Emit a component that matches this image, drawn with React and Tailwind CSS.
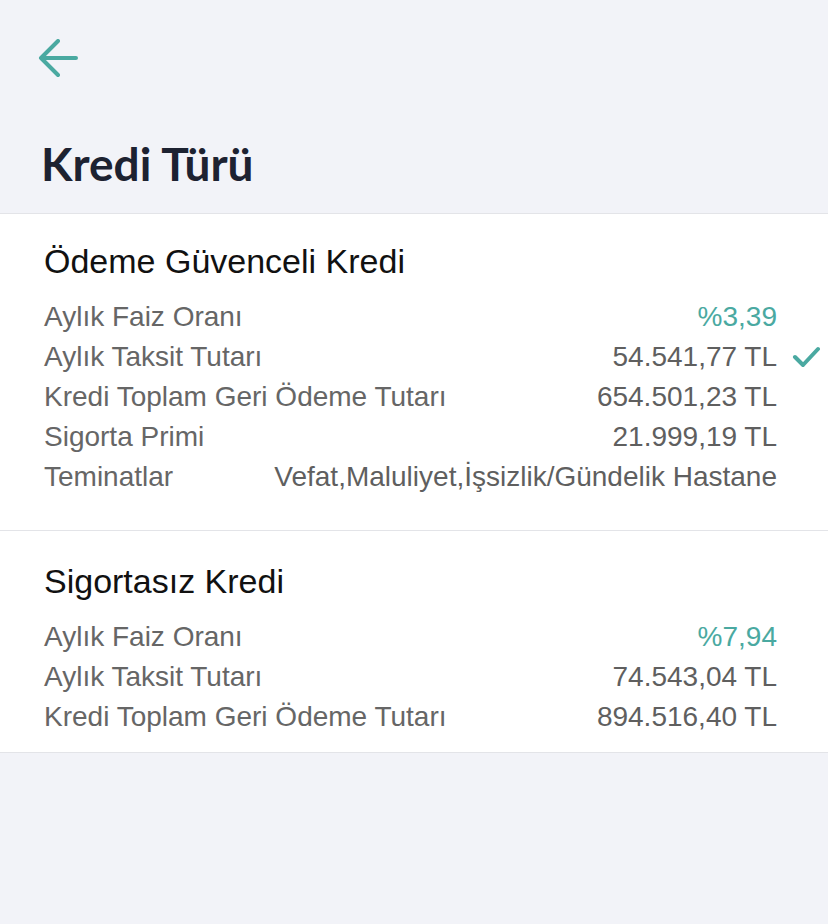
import React from "react";

function Row({ label, value, accent, checked }) {
  return (
    <div className="flex items-center h-[40px] leading-[40px] text-[28px]">
      <div className="flex-1 text-[#666666] whitespace-nowrap">{label}</div>
      <div className={(accent ? "text-[#4aa9a1]" : "text-[#5f5f5f]") + " whitespace-nowrap"}>{value}</div>
      <div className="w-[51px] flex items-center justify-end pr-[8px]">
        {checked && (
          <svg width="28" height="22" viewBox="0 0 28 22" fill="none">
            <path d="M3 11 L11 19 L26 3" stroke="#4aa9a1" strokeWidth="4" strokeLinecap="round" strokeLinejoin="round" />
          </svg>
        )}
      </div>
    </div>
  );
}

export default function App() {
  return (
    <div className="min-h-[924px] w-[828px] bg-[#f2f3f8]" style={{ fontFamily: '"Liberation Sans", Arial, sans-serif' }}>
      <div className="h-[213px] flex flex-col">
        <div className="pt-[39px] pl-[38px]">
          <svg width="40" height="40" viewBox="0 0 40 40" fill="none">
            <path d="M3 19 H38 M20 2 L3 19 L20 36" stroke="#4aa9a1" strokeWidth="4" strokeLinecap="round" strokeLinejoin="round" />
          </svg>
        </div>
        <h1 className="mt-[57px] pl-[41px] text-[46px] leading-[56px] font-bold text-[#1d2231]" style={{ fontFamily: 'Lato, sans-serif' }}>
          Kredi Türü
        </h1>
      </div>
      <div className="bg-white border-t border-[#e3e4e8] pl-[44px] pt-[27px] pb-[33px]">
        <div className="text-[34px] leading-[40px] text-[#111111] mb-[16px]">Ödeme Güvenceli Kredi</div>
        <Row label="Aylık Faiz Oranı" value="%3,39" accent />
        <Row label="Aylık Taksit Tutarı" value="54.541,77 TL" checked />
        <Row label="Kredi Toplam Geri Ödeme Tutarı" value="654.501,23 TL" />
        <Row label="Sigorta Primi" value="21.999,19 TL" />
        <Row label="Teminatlar" value="Vefat,Maluliyet,İşsizlik/Gündelik Hastane" />
      </div>
      <div className="bg-white border-t border-b border-[#e3e4e8] pl-[44px] pt-[30px] pb-[15px]">
        <div className="text-[34px] leading-[40px] text-[#111111] mb-[16px]">Sigortasız Kredi</div>
        <Row label="Aylık Faiz Oranı" value="%7,94" accent />
        <Row label="Aylık Taksit Tutarı" value="74.543,04 TL" />
        <Row label="Kredi Toplam Geri Ödeme Tutarı" value="894.516,40 TL" />
      </div>
    </div>
  );
}
